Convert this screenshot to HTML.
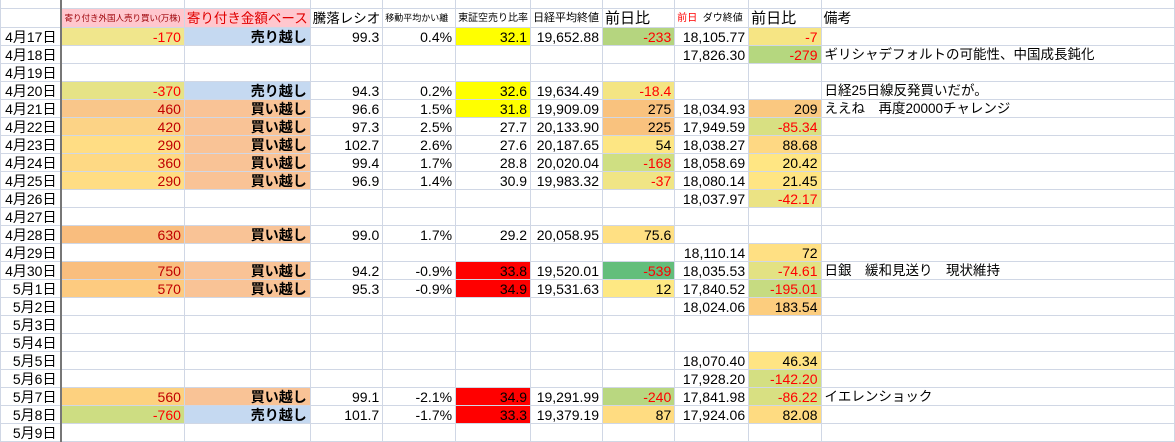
<!DOCTYPE html>
<html><head><meta charset="utf-8"><style>
*{margin:0;padding:0;box-sizing:border-box}
body{width:1175px;height:428px;overflow:hidden;background:#fff;font-family:"Liberation Sans","Noto Sans CJK JP",sans-serif;font-size:14px;color:#000;position:relative}
table{border-collapse:collapse;table-layout:fixed;position:absolute;left:0;top:-1px}
td{border:1px solid #d0d7e5;height:18px;line-height:16px;padding:0 3px;text-align:right;white-space:nowrap;overflow:hidden}
td:first-child{border-right:2px solid #777;padding-right:4px}
tr.top td{height:9px}
tr.hd td{height:19px;vertical-align:bottom;text-align:left;font-size:13px;line-height:17px;padding:0 2px}
td.k{text-align:left;padding-left:3px;font-size:13.5px}
.r{color:#f00}.dr{color:#c00000}
.b{font-weight:bold}
.s{background:#c5d9f1}.v{background:#f9c396}
.Y{background:#ffff00}.R{background:#ff0000}
</style></head><body>
<table>
<colgroup><col style="width:61px"><col style="width:123px"><col style="width:124px"><col style="width:72px"><col style="width:73px"><col style="width:74px"><col style="width:72px"><col style="width:73px"><col style="width:74px"><col style="width:73px"><col style="width:356px"></colgroup>
<tr class="top"><td></td><td></td><td></td><td></td><td></td><td></td><td></td><td></td><td></td><td></td><td></td></tr>
<tr class="hd"><td></td><td style="background:#ffc7ce;color:#9c0006;font-size:8.5px">寄り付き外国人売り買い(万株)</td><td style="background:#ffc7ce;color:#e00000;font-size:13.5px">寄り付き金額ベース</td><td style="font-size:13.5px">騰落レシオ</td><td style="font-size:9px">移動平均かい離</td><td style="font-size:10px">東証空売り比率</td><td style="font-size:11px">日経平均終値</td><td style="font-size:15px">前日比</td><td style="font-size:10px"><span class="r">前日</span>&nbsp; ダウ終値</td><td style="font-size:15px">前日比</td><td style="font-size:14px">備考</td></tr>
<tr><td>4月17日</td><td class="r" style="background:#f0e68c">-170</td><td class="s b">売り越し</td><td>99.3</td><td>0.4%</td><td class="Y">32.1</td><td>19,652.88</td><td class="r" style="background:#b5d57f">-233</td><td>18,105.77</td><td class="r" style="background:#f6e584">-7</td><td></td></tr>
<tr><td>4月18日</td><td></td><td></td><td></td><td></td><td></td><td></td><td></td><td>17,826.30</td><td class="r" style="background:#b5d77f">-279</td><td class="k">ギリシャデフォルトの可能性、中国成長鈍化</td></tr>
<tr><td>4月19日</td><td></td><td></td><td></td><td></td><td></td><td></td><td></td><td></td><td></td><td></td></tr>
<tr><td>4月20日</td><td class="r" style="background:#e6e386">-370</td><td class="s b">売り越し</td><td>94.3</td><td>0.2%</td><td class="Y">32.6</td><td>19,634.49</td><td class="r" style="background:#f4e583">-18.4</td><td></td><td></td><td class="k">日経25日線反発買いだが。</td></tr>
<tr><td>4月21日</td><td class="dr" style="background:#f9c68a">460</td><td class="v b">買い越し</td><td>96.6</td><td>1.5%</td><td class="Y">31.8</td><td>19,909.09</td><td style="background:#f9c27e">275</td><td>18,034.93</td><td style="background:#fac880">209</td><td class="k">ええね　再度20000チャレンジ</td></tr>
<tr><td>4月22日</td><td class="dr" style="background:#fcd386">420</td><td class="v b">買い越し</td><td>97.3</td><td>2.5%</td><td>27.7</td><td>20,133.90</td><td style="background:#f9c27e">225</td><td>17,949.59</td><td class="r" style="background:#d8e082">-85.34</td><td></td></tr>
<tr><td>4月23日</td><td class="dr" style="background:#ffdd84">290</td><td class="v b">買い越し</td><td>102.7</td><td>2.6%</td><td>27.6</td><td>20,187.65</td><td style="background:#fde683">54</td><td>18,038.27</td><td style="background:#fed883">88.68</td><td></td></tr>
<tr><td>4月24日</td><td class="dr" style="background:#fed984">360</td><td class="v b">買い越し</td><td>99.4</td><td>1.7%</td><td>28.8</td><td>20,020.04</td><td class="r" style="background:#cfdf82">-168</td><td>18,058.69</td><td style="background:#ffe683">20.42</td><td></td></tr>
<tr><td>4月25日</td><td class="dr" style="background:#ffdd84">290</td><td class="v b">買い越し</td><td>96.9</td><td>1.4%</td><td>30.9</td><td>19,983.32</td><td class="r" style="background:#f0e585">-37</td><td>18,080.14</td><td style="background:#ffe583">21.45</td><td></td></tr>
<tr><td>4月26日</td><td></td><td></td><td></td><td></td><td></td><td></td><td></td><td>18,037.97</td><td class="r" style="background:#ebe384">-42.17</td><td></td></tr>
<tr><td>4月27日</td><td></td><td></td><td></td><td></td><td></td><td></td><td></td><td></td><td></td><td></td></tr>
<tr><td>4月28日</td><td class="dr" style="background:#f9bd7e">630</td><td class="v b">買い越し</td><td>99.0</td><td>1.7%</td><td>29.2</td><td>20,058.95</td><td style="background:#ffe083">75.6</td><td></td><td></td><td></td></tr>
<tr><td>4月29日</td><td></td><td></td><td></td><td></td><td></td><td></td><td></td><td>18,110.14</td><td style="background:#ffe083">72</td><td></td></tr>
<tr><td>4月30日</td><td class="dr" style="background:#f9be7e">750</td><td class="v b">買い越し</td><td>94.2</td><td>-0.9%</td><td class="R">33.8</td><td>19,520.01</td><td class="r" style="background:#63be7b">-539</td><td>18,035.53</td><td class="r" style="background:#e3e283">-74.61</td><td class="k">日銀　緩和見送り　現状維持</td></tr>
<tr><td>5月1日</td><td class="dr" style="background:#fdcb80">570</td><td class="v b">買い越し</td><td>95.3</td><td>-0.9%</td><td class="R">34.9</td><td>19,531.63</td><td style="background:#fee883">12</td><td>17,840.52</td><td class="r" style="background:#c6db81">-195.01</td><td></td></tr>
<tr><td>5月2日</td><td></td><td></td><td></td><td></td><td></td><td></td><td></td><td>18,024.06</td><td style="background:#fccd7e">183.54</td><td></td></tr>
<tr><td>5月3日</td><td></td><td></td><td></td><td></td><td></td><td></td><td></td><td></td><td></td><td></td></tr>
<tr><td>5月4日</td><td></td><td></td><td></td><td></td><td></td><td></td><td></td><td></td><td></td><td></td></tr>
<tr><td>5月5日</td><td></td><td></td><td></td><td></td><td></td><td></td><td></td><td>18,070.40</td><td style="background:#ffe483">46.34</td><td></td></tr>
<tr><td>5月6日</td><td></td><td></td><td></td><td></td><td></td><td></td><td></td><td>17,928.20</td><td class="r" style="background:#d4df82">-142.20</td><td></td></tr>
<tr><td>5月7日</td><td class="dr" style="background:#fdd17f">560</td><td class="v b">買い越し</td><td>99.1</td><td>-2.1%</td><td class="R">34.9</td><td>19,291.99</td><td class="r" style="background:#b9d780">-240</td><td>17,841.98</td><td class="r" style="background:#d8e082">-86.22</td><td class="k">イエレンショック</td></tr>
<tr><td>5月8日</td><td class="r" style="background:#cddd82">-760</td><td class="s b">売り越し</td><td>101.7</td><td>-1.7%</td><td class="R">33.3</td><td>19,379.19</td><td style="background:#ffdc81">87</td><td>17,924.06</td><td style="background:#fedb81">82.08</td><td></td></tr>
<tr><td>5月9日</td><td></td><td></td><td></td><td></td><td></td><td></td><td></td><td></td><td></td><td></td></tr>
</table>
</body></html>
